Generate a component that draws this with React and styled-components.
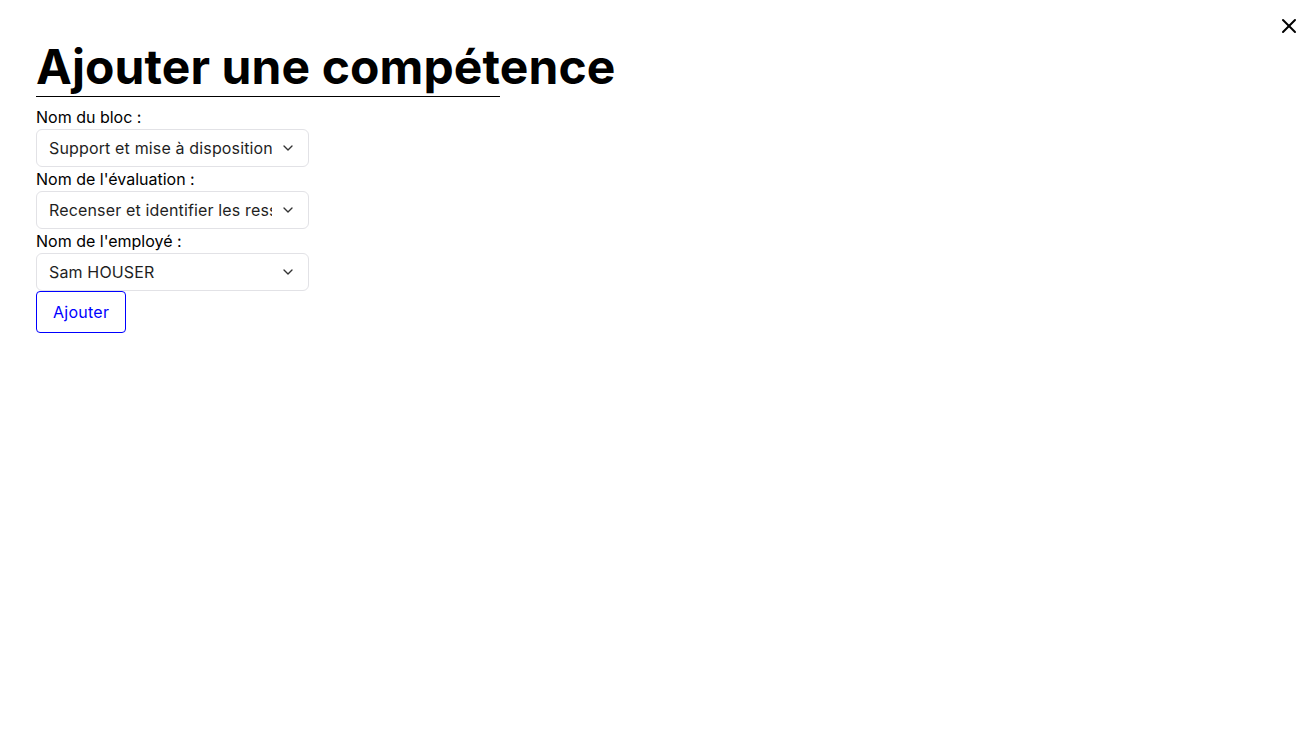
import React from 'react';
import styled, { createGlobalStyle } from 'styled-components';
import { X, ChevronDown } from 'lucide-react';

const GlobalStyle = createGlobalStyle`
  html, body {
    margin: 0;
    padding: 0;
    background: #ffffff;
    font-family: Inter, "Noto Sans", sans-serif;
    color: #000000;
  }
  * {
    box-sizing: border-box;
  }
`;

const Page = styled.div`
  position: relative;
  min-height: 730px;
  padding: 37px 36px;
`;

const CloseButton = styled.button`
  position: absolute;
  top: 13px;
  right: 8px;
  width: 26px;
  height: 26px;
  padding: 0;
  border: none;
  background: transparent;
  color: #000000;
  display: flex;
  align-items: center;
  justify-content: center;
  cursor: pointer;
`;

const Title = styled.h1`
  margin: 0 0 8px;
  width: 464px;
  font-size: 48px;
  font-weight: 700;
  line-height: normal;
  letter-spacing: 0.1px;
  white-space: nowrap;
  border-bottom: 1px solid #000000;
`;

const Form = styled.form`
  display: flex;
  flex-direction: column;
  align-items: flex-start;
`;

const Label = styled.label`
  font-size: 16px;
  line-height: 24px;
  color: #000000;
`;

const SelectWrap = styled.div`
  position: relative;
  width: 273px;
`;

const Select = styled.select`
  appearance: none;
  width: 100%;
  height: 38px;
  padding: 0 36px 0 12px;
  border: 1px solid #e2e2e6;
  border-radius: 6px;
  background: #ffffff;
  font-family: Inter, "Noto Sans", sans-serif;
  font-size: 16px;
  letter-spacing: 0.15px;
  color: #1f1f1f;
  outline: none;
`;

const Chevron = styled.span`
  position: absolute;
  top: 50%;
  right: 13px;
  transform: translateY(-50%);
  display: flex;
  color: #333333;
  pointer-events: none;
`;

const SubmitButton = styled.button`
  height: 42px;
  padding: 0 16px;
  border: 1px solid #0000ff;
  border-radius: 4px;
  background: #ffffff;
  color: #0000ff;
  font-family: Inter, "Noto Sans", sans-serif;
  font-size: 16px;
  letter-spacing: 0.25px;
  cursor: pointer;
`;

const fields = [
  { id: 'bloc', label: 'Nom du bloc :', value: 'Support et mise à disposition' },
  { id: 'evaluation', label: "Nom de l'évaluation :", value: 'Recenser et identifier les ressources numériques' },
  { id: 'employe', label: "Nom de l'employé :", value: 'Sam HOUSER' },
];

function App() {
  return (
    <Page>
      <GlobalStyle />
      <CloseButton type="button" aria-label="Fermer">
        <X size={24} strokeWidth={2} />
      </CloseButton>
      <Title>Ajouter une compétence</Title>
      <Form onSubmit={(e) => e.preventDefault()}>
        {fields.map((f) => (
          <React.Fragment key={f.id}>
            <Label htmlFor={f.id}>{f.label}</Label>
            <SelectWrap>
              <Select id={f.id} defaultValue={f.value}>
                <option value={f.value}>{f.value}</option>
              </Select>
              <Chevron>
                <ChevronDown size={16} strokeWidth={2} />
              </Chevron>
            </SelectWrap>
          </React.Fragment>
        ))}
        <SubmitButton type="submit">Ajouter</SubmitButton>
      </Form>
    </Page>
  );
}

export default App;
